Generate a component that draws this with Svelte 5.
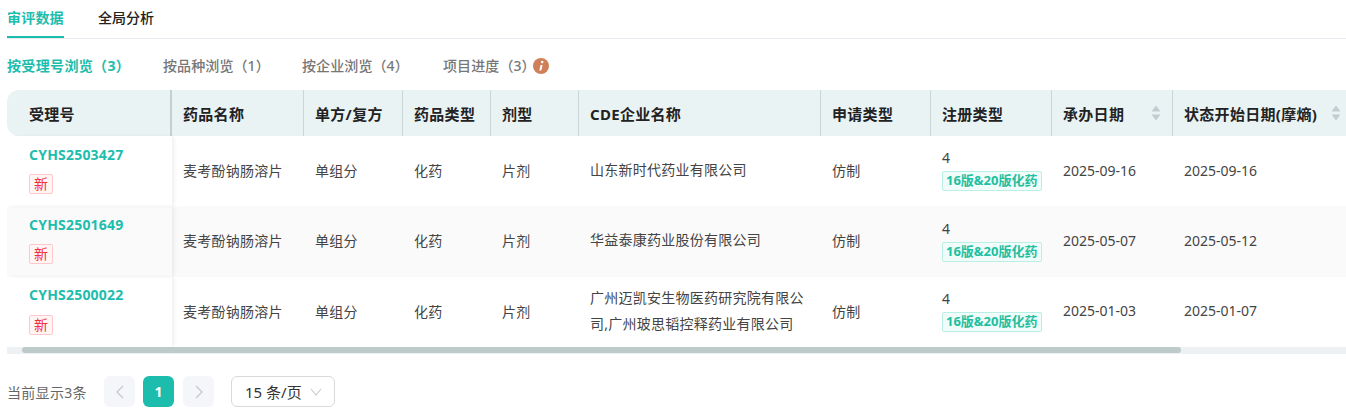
<script>
  const cols = [
    { t: '受理号', w: 165 }, { t: '药品名称', w: 132 }, { t: '单方/复方', w: 99 }, { t: '药品类型', w: 88 },
    { t: '剂型', w: 88 }, { t: 'CDE企业名称', w: 242 }, { t: '申请类型', w: 110 }, { t: '注册类型', w: 121 },
    { t: '承办日期', w: 121, sort: true }, { t: '状态开始日期(摩熵)', w: 180, sort: true }
  ];
  const rows = [
    { id: 'CYHS2503427', co: ['山东新时代药业有限公司'], a: '2025-09-16', b: '2025-09-16' },
    { id: 'CYHS2501649', co: ['华益泰康药业股份有限公司'], a: '2025-05-07', b: '2025-05-12' },
    { id: 'CYHS2500022', co: ['广州迈凯安生物医药研究院有限公', '司,广州玻思韬控释药业有限公司'], a: '2025-01-03', b: '2025-01-07' }
  ];
  const subs = [['按受理号浏览（3）', 156], ['按品种浏览（1）', 139], ['按企业浏览（4）', 141], ['项目进度（3）', 90]];
</script>

<div class="page">
  <nav class="tabs">
    <span class="tab active">审评数据</span>
    <span class="tab">全局分析</span>
  </nav>
  <div class="subs">
    {#each subs as s, i}
      <span class="sub" class:on={i === 0} style="width:{s[1]}px">{s[0]}</span>
    {/each}
    <svg class="info" width="16" height="16" viewBox="0 0 16 16">
      <circle cx="8" cy="8" r="8" fill="#cf8059" />
      <circle cx="9.2" cy="4" r="1.2" fill="#fff" />
      <path d="M7.6 7h2l-1.3 5.6h-2z" fill="#fff" />
    </svg>
  </div>

  <div class="table">
    <div class="head">
      {#each cols as c, i}
        <div class="th" class:first={i === 0} style="width:{c.w}px">
          <span>{c.t}</span>
          {#if c.sort}
            <svg class="sort" width="10" height="16" viewBox="0 0 10 16">
              <path d="M5 0.5l4.5 6h-9z" fill="#c2cdd0" />
              <path d="M5 15.5l4.5-6h-9z" fill="#c2cdd0" />
            </svg>
          {/if}
        </div>
      {/each}
    </div>
    {#each rows as r, ri}
      <div class="row" class:alt={ri === 1}>
        <div class="td first" style="width:165px">
          <span class="id">{r.id}</span>
          <span class="new">新</span>
        </div>
        <div class="td cjk" style="width:132px">麦考酚钠肠溶片</div>
        <div class="td cjk" style="width:99px">单组分</div>
        <div class="td cjk" style="width:88px">化药</div>
        <div class="td cjk" style="width:88px">片剂</div>
        <div class="td cjk co" style="width:242px">
          {#each r.co as line}<span>{line}</span>{/each}
        </div>
        <div class="td cjk" style="width:110px">仿制</div>
        <div class="td reg" style="width:121px">
          <span class="four">4</span>
          <span class="ver">16版&amp;20版化药</span>
        </div>
        <div class="td" style="width:121px">{r.a}</div>
        <div class="td" style="width:180px">{r.b}</div>
      </div>
    {/each}
    <div class="track"><div class="thumb"></div></div>
  </div>

  <div class="pager">
    <span class="count">当前显示3条</span>
    <span class="pbtn">
      <svg width="10" height="14" viewBox="0 0 10 14"><path d="M8 1L2 7l6 6" fill="none" stroke="#c2c5cc" stroke-width="1.2" /></svg>
    </span>
    <span class="pbtn cur">1</span>
    <span class="pbtn">
      <svg width="10" height="14" viewBox="0 0 10 14"><path d="M2 1l6 6-6 6" fill="none" stroke="#c2c5cc" stroke-width="1.2" /></svg>
    </span>
    <span class="size">
      15 条/页
      <svg width="12" height="8" viewBox="0 0 12 8"><path d="M1 1l5 6 5-6" fill="none" stroke="#c4c7cc" stroke-width="1.1" /></svg>
    </span>
  </div>
</div>

<style>
  :global(body) {
    margin: 0;
    background: #fff;
  }
  .page {
    width: 1346px;
    height: 411px;
    overflow: hidden;
    box-sizing: border-box;
    padding-left: 7px;
    font-family: "Noto Sans", "Noto Sans CJK SC", sans-serif;
    font-size: 14px;
    color: #444;
  }
  .tabs {
    display: flex;
    gap: 34px;
    height: 38px;
    border-bottom: 1px solid #e8e8ee;
    box-sizing: content-box;
  }
  .tab {
    height: 36px;
    line-height: 36px;
    font-size: 14px;
    font-weight: 500;
    color: #222;
    width: 57px;
  }
  .tab.active {
    color: #1dbdad;
    font-weight: 700;
    letter-spacing: 0.2px;
    border-bottom: 2px solid #1dbdad;
  }
  .subs {
    display: flex;
    align-items: center;
    height: 51px;
  }
  .sub {
    font-size: 14px;
    color: #777;
    font-weight: 500;
    letter-spacing: 0.1px;
    white-space: nowrap;
    flex: none;
  }
  .sub.on {
    color: #1dbdad;
    font-weight: 700;
    letter-spacing: 0.35px;
  }
  .info {
    margin-top: 2px;
    flex: none;
  }
  .table {
    width: 1339px;
    overflow: hidden;
  }
  .head {
    display: flex;
    height: 46px;
    background: #eaf3f4;
    border-radius: 12px 0 0 12px;
    width: max-content;
  }
  .th {
    flex: none;
    box-sizing: border-box;
    display: flex;
    align-items: center;
    justify-content: space-between;
    padding: 0 11px;
    border-right: 1px solid #c8d6d6;
    font-size: 15px;
    font-weight: 700;
    letter-spacing: 0.3px;
    color: #222;
    white-space: nowrap;
  }
  .th.first {
    padding-left: 22px;
    border-right: 2px solid #c3d0d0;
  }
  .sort {
    flex: none;
  }
  .row {
    display: flex;
    width: max-content;
    height: 70.33px;
    background: #fff;
  }
  .row.alt {
    background: #fafafa;
  }
  .td {
    flex: none;
    box-sizing: border-box;
    padding: 0 0 2px 11px;
    display: flex;
    align-items: center;
    white-space: nowrap;
    font-size: 14px;
    color: #444;
  }
  .cjk {
    letter-spacing: 0.25px;
  }
  .td.first {
    flex-direction: column;
    align-items: flex-start;
    justify-content: flex-start;
    padding: 7.8px 0 0 22px;
    box-shadow: 3px 0 4px -1px rgba(0, 0, 0, 0.07);
    position: relative;
  }
  .id {
    color: #1dbdad;
    font-weight: 700;
    line-height: 21px;
    letter-spacing: 0.2px;
  }
  .new {
    margin-top: 9.2px;
    width: 24px;
    height: 20px;
    box-sizing: border-box;
    border: 1px solid #ffc9cc;
    border-radius: 2px;
    background: #fff5f5;
    color: #f5303c;
    font-size: 14px;
    line-height: 18px;
    text-align: center;
  }
  .co {
    flex-direction: column;
    align-items: flex-start;
    justify-content: center;
    line-height: 26px;
  }
  .reg {
    flex-direction: column;
    align-items: flex-start;
    justify-content: center;
    padding-bottom: 2.4px;
  }
  .four {
    line-height: 17px;
    margin-top: 1px;
  }
  .ver {
    margin-top: 5px;
    height: 20px;
    box-sizing: border-box;
    border: 1px solid #b9efe4;
    border-radius: 2px;
    background: #effcf9;
    color: #1fbf9f;
    font-size: 13px;
    font-weight: 700;
    line-height: 17px;
    padding: 0 3px;
  }
  .track {
    height: 7px;
    background: #eef1f3;
    position: relative;
    display: flex;
    padding-left: 15px;
  }
  .thumb {
    width: 1159px;
    height: 6px;
    background: #bdcaca;
    border-radius: 3px;
  }
  .pager {
    display: flex;
    align-items: center;
    margin-top: 22px;
    height: 32px;
  }
  .count {
    color: #666;
    width: 97px;
    letter-spacing: 0.3px;
    flex: none;
  }
  .pbtn {
    width: 31px;
    height: 31px;
    border-radius: 6px;
    background: #f5f6fa;
    display: flex;
    align-items: center;
    justify-content: center;
    margin-right: 8px;
    flex: none;
  }
  .pbtn.cur {
    background: #1dbdad;
    color: #fff;
    font-weight: 700;
    font-size: 14px;
    margin-right: 9px;
  }
  .size {
    margin-left: 9px;
    width: 104px;
    height: 31px;
    box-sizing: border-box;
    border: 1px solid #d9d9d9;
    border-radius: 6px;
    display: flex;
    align-items: center;
    gap: 8px;
    padding-left: 13px;
    font-size: 15px;
    color: #333;
    white-space: nowrap;
  }
</style>
